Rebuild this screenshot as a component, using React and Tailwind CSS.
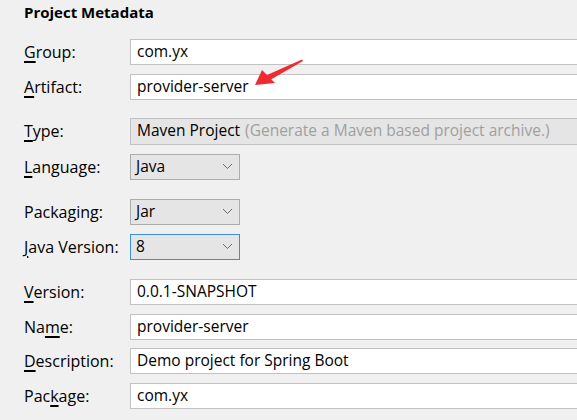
import React from 'react';

const U = ({ children }) => (
  <span className="underline decoration-2 underline-offset-[3px]">{children}</span>
);

const Label = ({ children }) => (
  <div className="w-[106px] shrink-0 text-[16px] text-black">{children}</div>
);

const TextField = ({ value }) => (
  <div className="flex h-[26px] flex-1 items-center border border-[#c2c2c2] bg-white pl-[6px] text-[15.5px] text-black">
    {value}
  </div>
);

const Chevron = () => (
  <svg width="11" height="7" viewBox="0 0 11 7" className="text-[#6b6b6b]">
    <path d="M1 1 L5.5 5.5 L10 1" fill="none" stroke="currentColor" strokeWidth="1" />
  </svg>
);

const Select = ({ value, focused }) => (
  <div
    className={`flex h-[26px] w-[110px] items-center justify-between bg-[#e5e5e5] pl-[5px] pr-[6px] text-[15.5px] text-black border ${
      focused ? 'border-[#3c8fd6]' : 'border-[#adadad]'
    }`}
  >
    <span>{value}</span>
    <Chevron />
  </div>
);

const Row = ({ label, children, mt }) => (
  <div className={`flex items-center ${mt}`}>
    <Label>{label}</Label>
    {children}
  </div>
);

export default function App() {
  return (
    <div
      className="relative h-[420px] w-[577px] overflow-hidden bg-[#f0f0f0] pl-[24px]"
      style={{ fontFamily: '"Open Sans", "Noto Sans CJK SC", sans-serif' }}
    >
      <div className="pt-[1px] text-[15px] font-bold text-black">Project Metadata</div>

      <div className="-mr-[4px] mt-[15px] flex flex-col">
        <Row label={<><U>G</U>roup:</>} mt="mt-0">
          <TextField value="com.yx" />
        </Row>
        <Row label={<><U>A</U>rtifact:</>} mt="mt-[9px]">
          <TextField value="provider-server" />
        </Row>
        <Row label={<><U>T</U>ype:</>} mt="mt-[18px]">
          <div className="flex h-[27px] flex-1 items-center whitespace-nowrap border border-[#c2c2c2] bg-[#e5e5e5] pl-[6px] text-[15.5px] text-black">
            Maven Project<span className="ml-[5px] text-[#a0a0a0]">(Generate a Maven based project archive.)</span>
          </div>
        </Row>
        <Row label={<><U>L</U>anguage:</>} mt="mt-[9px]">
          <Select value="Java" />
        </Row>
        <Row label={<>Packa<U>g</U>ing:</>} mt="mt-[19px]">
          <Select value="Jar" />
        </Row>
        <Row label={<><U>J</U>ava Version:</>} mt="mt-[9px]">
          <Select value="8" focused />
        </Row>
        <Row label={<><U>V</U>ersion:</>} mt="mt-[19px]">
          <TextField value="0.0.1-SNAPSHOT" />
        </Row>
        <Row label={<>Na<U>m</U>e:</>} mt="mt-[9px]">
          <TextField value="provider-server" />
        </Row>
        <Row label={<><U>D</U>escription:</>} mt="mt-[8px]">
          <TextField value="Demo project for Spring Boot" />
        </Row>
        <Row label={<>Pac<U>k</U>age:</>} mt="mt-[9px]">
          <TextField value="com.yx" />
        </Row>
      </div>

      {/* red annotation arrow */}
      <svg className="absolute left-0 top-0" width="577" height="420">
        <path d="M302 59.5 L303 61 L270 80 L267 75 Z" fill="#ee2b2f" />
        <path d="M255 85 L262 70 L275 83 Z" fill="#ee2b2f" />
      </svg>
    </div>
  );
}
